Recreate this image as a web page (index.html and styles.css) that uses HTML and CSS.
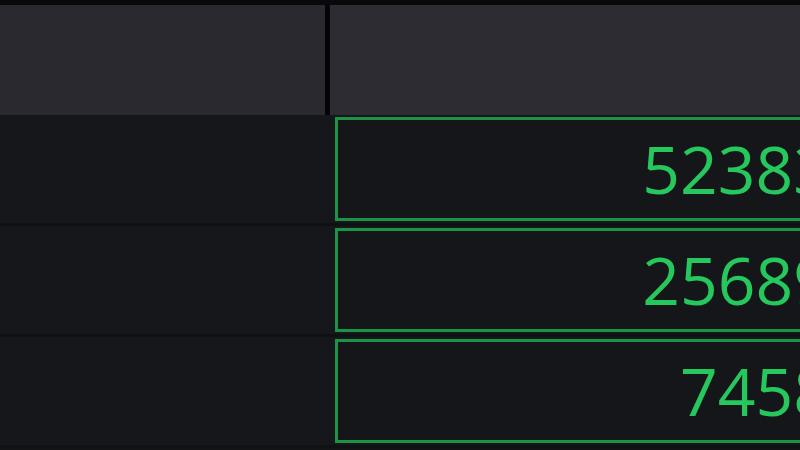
FILE: index.html
```html
<!DOCTYPE html>
<html lang="en">
<head>
    <meta charset="UTF-8">
    <meta name="viewport" content="width=device-width, initial-scale=1.0">
    <title>Counters</title>
    <link rel="stylesheet" href="styles.css">
</head>
<body>

    <div class="top-strip"></div>

    <div class="table">
        <!-- Header row -->
        <div class="head-cell head-left"></div>
        <div class="head-cell head-right"></div>

        <!-- Data rows -->
        <div class="row-cell"></div>
        <div class="row-cell value-cell">
            <div class="value-box">52383</div>
        </div>

        <div class="row-cell"></div>
        <div class="row-cell value-cell">
            <div class="value-box">25689</div>
        </div>

        <div class="row-cell"></div>
        <div class="row-cell value-cell">
            <div class="value-box">7458</div>
        </div>
    </div>

</body>
</html>
```

FILE: styles.css
```css
body {
    margin: 0;
    padding: 0;
    height: 100vh;
    background-color: #121416;
    overflow: hidden;
    font-family: "Open Sans", Roboto, sans-serif;
}

.top-strip {
    height: 5px;
    background-color: #09090b;
}

.table {
    width: 860px;
    display: grid;
    grid-template-columns: 325px 1fr;
    grid-template-rows: 110px repeat(3, 111px);
}

.head-cell {
    background-color: #2c2b31;
}

.head-left {
    background-color: #2a292f;
}

.head-right {
    border-left: 5px solid #050507;
    background-color: #2d2c32;
}

.row-cell {
    background-color: #15171a;
    border-bottom: 3px solid #0f1113;
}

.value-cell {
    padding: 2px 0 2px 10px;
}

.value-box {
    box-sizing: border-box;
    height: 104px;
    border: 3px solid #1c9443;
    background-color: #141619;
    color: #26c75c;
    font-size: 66px;
    line-height: 96px;
    text-align: right;
    padding-right: 26px;
}
```
